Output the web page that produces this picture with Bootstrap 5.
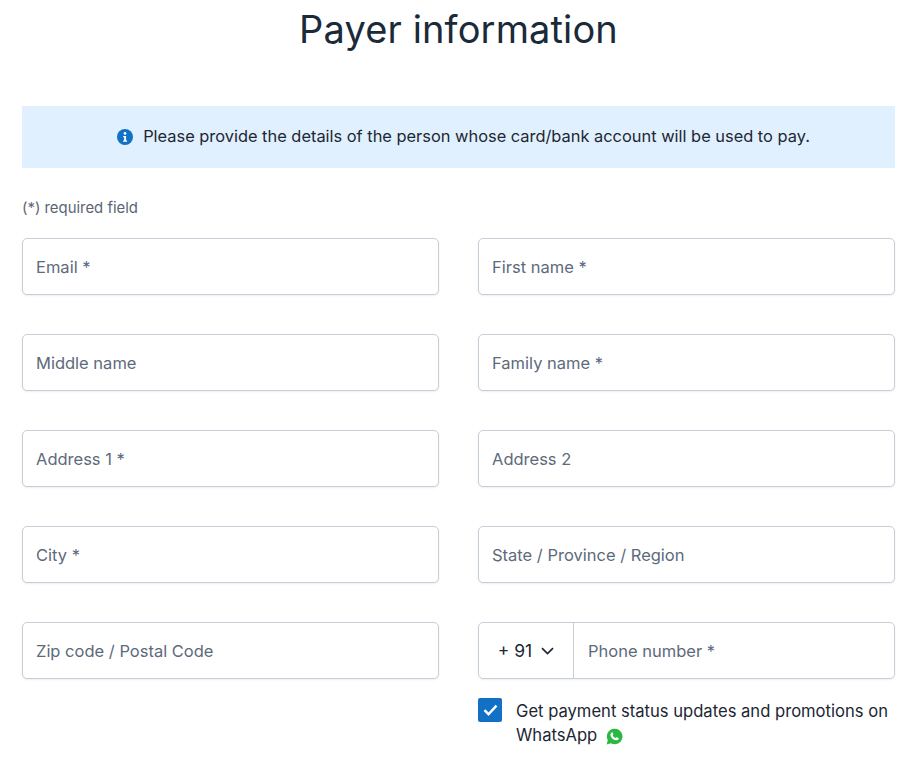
<!DOCTYPE html>
<html lang="en">
<head>
<meta charset="utf-8">
<title>Payer information</title>
<link href="https://cdn.jsdelivr.net/npm/bootstrap@5.3.0/dist/css/bootstrap.min.css" rel="stylesheet">
<style>
html,body{height:100%;overflow:hidden}
body{font-family:"Inter","Noto Sans",sans-serif;background:#fff;color:#1c2733;font-size:16px}
.pay-wrap{padding:0 21px 0 22px}
.pay-title{font-size:38px;font-weight:400;line-height:46px;margin:6px 0 0;text-align:center;color:#1a2a38;letter-spacing:.13px}
.pay-note{margin-top:54px;height:62px;padding:0 0 2px 10px;background:#e1f0fe;gap:10px;font-size:16.4px;color:#1c2733}
.pay-note svg{margin-top:2px}
.pay-req{margin-top:31px;height:19px;line-height:19px;font-size:14.9px;color:#5b6675}
.pay-grid{margin-top:20px;display:grid;grid-template-columns:417px 417px;column-gap:39px;row-gap:39px}
.pay-field.form-control,.pay-phone{height:57px;border:1px solid #c8ced7;border-radius:5px;box-shadow:0 1px 2px rgba(30,50,80,.08)}
.pay-field.form-control{padding:0 13px;font-size:16.5px;color:#1c2733}
.pay-field.form-control::placeholder{color:#5d6a7c;opacity:1}
.pay-phone .pay-field.form-control{height:auto;padding:2px 14px 0;border:0;box-shadow:none;border-radius:0 5px 5px 0;background:transparent}
.pay-code{width:95px;border-right:1px solid #c8ced7;gap:9px;color:#1c2733;font-size:17.5px;padding-top:1px}
.pay-check{margin-top:-20px;gap:14px;grid-column:2;line-height:24px;font-size:16.6px;color:#1c2733}
.pay-box{width:24px;height:24px;border-radius:2px;background:#1271c4}
.pay-label{padding-top:1px}
.pay-wa{margin-left:9px;vertical-align:-4px}
</style>
</head>
<body>
<main class="pay-wrap">
  <h1 class="pay-title">Payer information</h1>
  <div class="pay-note d-flex align-items-center justify-content-center">
    <svg width="16" height="16" viewBox="0 0 16 16" aria-hidden="true"><circle cx="8" cy="8" r="8" fill="#1271c4"/><circle cx="8" cy="4.4" r="1.35" fill="#fff"/><path d="M6.200 6.900h2.900v4.600h1v1.300H6.100v-1.300h1v-3.300h-.9z" fill="#fff"/></svg>
    <span>Please provide the details of the person whose card/bank account will be used to pay.</span>
  </div>
  <div class="pay-req">(*) required field</div>
  <form class="pay-grid">
    <input class="form-control pay-field" placeholder="Email *">
    <input class="form-control pay-field" placeholder="First name *">
    <input class="form-control pay-field" placeholder="Middle name">
    <input class="form-control pay-field" placeholder="Family name *">
    <input class="form-control pay-field" placeholder="Address 1 *">
    <input class="form-control pay-field" placeholder="Address 2">
    <input class="form-control pay-field" placeholder="City *">
    <input class="form-control pay-field" placeholder="State / Province / Region">
    <input class="form-control pay-field" placeholder="Zip code / Postal Code">
    <div class="pay-phone d-flex">
      <div class="pay-code d-flex align-items-center justify-content-center flex-shrink-0">
        <span>+ 91</span>
        <svg width="13" height="8" viewBox="0 0 13 8" aria-hidden="true"><path d="M1 1.200l5.500 5.300 5.500-5.300" fill="none" stroke="#1c2733" stroke-width="1.7"/></svg>
      </div>
      <input class="form-control pay-field" placeholder="Phone number *">
    </div>
    <div class="pay-check d-flex">
      <span class="pay-box d-flex align-items-center justify-content-center flex-shrink-0">
        <svg width="15" height="12" viewBox="0 0 15 12" aria-hidden="true"><path d="M1.500 6.200l4 4 8-8.600" fill="none" stroke="#fff" stroke-width="2.400"/></svg>
      </span>
      <span class="pay-label">Get payment status updates and promotions on WhatsApp<svg class="pay-wa" width="17" height="17" viewBox="0 0 17 17" aria-hidden="true"><path d="M.6 16.400l1.200-4.200A7.800 7.800 0 1 1 4.900 15.300z" fill="#2bb741"/><path d="M5.600 4.400c.3-.3.8-.4 1 0l.8 1.600c.1.3 0 .6-.2.8l-.5.6c.6 1.200 1.500 2.100 2.800 2.700l.7-.7c.2-.2.5-.2.8-.1l1.500.8c.3.2.4.6.2 1-.5 1-1.600 1.400-2.700 1.100C7.300 12 5.100 10 4.500 7.500c-.3-1.200.2-2.300 1.100-3.100z" fill="#fff"/></svg></span>
    </div>
  </form>
</main>
</body>
</html>
